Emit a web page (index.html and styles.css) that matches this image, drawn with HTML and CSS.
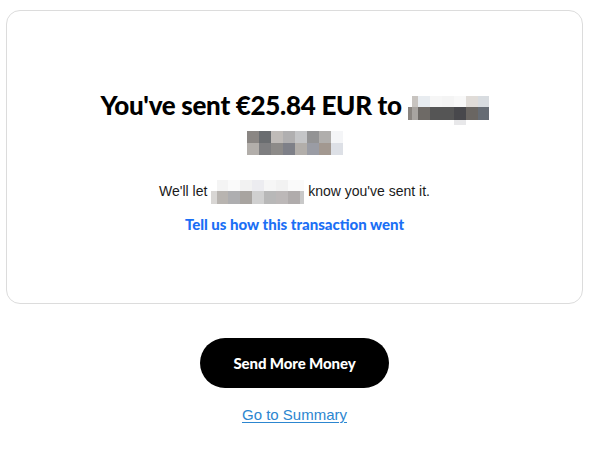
FILE: index.html
```html
<!DOCTYPE html>
<html lang="en">
<head>
<meta charset="utf-8">
<title>Transfer sent</title>
<link rel="stylesheet" href="styles.css">
</head>
<body>
<main class="page">
  <section class="card">
    <h1 class="title">You've sent €25.84 EUR to <span class="mosaic mosaic-name1"></span> <span class="mosaic mosaic-name2"></span></h1>
    <p class="note">We'll let <span class="mosaic mosaic-name3"></span> know you've sent it.</p>
    <a class="feedback" href="#">Tell us how this transaction went</a>
  </section>
  <a class="btn" href="#">Send More Money</a>
  <a class="summary" href="#">Go to Summary</a>
</main>
</body>
</html>
```
FILE: styles.css
```css
html, body {
  margin: 0;
  padding: 0;
  background: #ffffff;
}

.page {
  width: 577px;
  margin-left: 6px;
  padding-top: 10px;
  display: flex;
  flex-direction: column;
  align-items: center;
  font-family: "Liberation Sans", Arial, sans-serif;
}

.card {
  box-sizing: border-box;
  width: 577px;
  height: 294px;
  border: 1px solid #dcdcdc;
  border-radius: 14px;
  padding: 77px 20px 0;
  display: flex;
  flex-direction: column;
  align-items: center;
  text-align: center;
}

.title {
  margin: 0;
  max-width: 420px;
  font-family: Lato, "Open Sans", sans-serif;
  font-weight: 900;
  font-size: 26px;
  line-height: 35px;
  letter-spacing: -0.3px;
  color: #000;
}

.mosaic {
  display: inline-block;
  vertical-align: middle;
}

.mosaic-name1 {
  width: 81px;
  height: 29px;
  position: relative;
  top: 2px;
  background:
    linear-gradient(to right, #ffffff 0 4px, #c8c4c0 4px 10px, #e8ecf0 10px 22px, #f6f6f6 22px 34px, #f4f4f4 34px 46px, #f8f8f8 46px 58px, #e0dcd8 58px 70px, #d8dce0 70px 81px) top / 100% 11px no-repeat,
    linear-gradient(to right, #8a8580 0 4px, #a8a4a0 4px 10px, #6e6a66 10px 22px, #555555 22px 34px, #555555 34px 46px, #48484c 46px 58px, #6a6662 58px 70px, #666c74 70px 81px) 0 11px / 100% 13px no-repeat,
    linear-gradient(to right, transparent 0 46px, #e8e8ea 46px 58px, transparent 58px) 0 24px / 100% 5px no-repeat;
}

.mosaic-name2 {
  width: 96px;
  height: 24px;
  background:
    linear-gradient(to right, #8a8683 0 12px, #6a6d70 12px 24px, #bfbbb8 24px 36px, #b0afb0 36px 48px, #c4c5c7 48px 60px, #939394 60px 72px, #b0aeac 72px 84px, #f4f5f7 84px 96px) top / 100% 12px no-repeat,
    linear-gradient(to right, #b2aeaa 0 12px, #7e7e80 12px 24px, #8d8b89 24px 36px, #7e8088 36px 48px, #b2aeaa 48px 60px, #9a9ca4 60px 72px, #a29890 72px 84px, #dde0e6 84px 96px) bottom / 100% 12px no-repeat;
}

.note {
  margin: 22px 0 0;
  font-size: 14px;
  line-height: 20px;
  color: #1a1a1a;
}

.mosaic-name3 {
  width: 93px;
  height: 24px;
  background:
    linear-gradient(to right, #ffffff 0 6px, #f4f4f4 6px 17px, #fafafa 17px 29px, #f2f2f2 29px 41px, #ececf0 41px 53px, #f6f6f6 53px 65px, #f2f2f2 65px 77px, #fafafa 77px 93px) top / 100% 11px no-repeat,
    linear-gradient(to right, #d8d6d4 0 6px, #b8b4b0 6px 17px, #aeaeb0 17px 29px, #a8a4a0 29px 41px, #d0d0d0 41px 53px, #b8b8b8 53px 65px, #bcb8b8 65px 77px, #b0acac 77px 89px, #c8c8c8 89px 93px) bottom / 100% 13px no-repeat;
}

.feedback {
  margin-top: 10px;
  font-family: Lato, "Open Sans", sans-serif;
  font-weight: 900;
  font-size: 15px;
  line-height: 20px;
  letter-spacing: 0;
  color: #1b6ff5;
  text-decoration: none;
}

.btn {
  margin-top: 34px;
  box-sizing: border-box;
  width: 189px;
  height: 50px;
  border-radius: 25px;
  background: #000;
  color: #fff;
  display: flex;
  align-items: center;
  justify-content: center;
  font-family: Lato, "Open Sans", sans-serif;
  font-weight: 900;
  font-size: 15px;
  letter-spacing: -0.1px;
  text-decoration: none;
}

.summary {
  margin-top: 17px;
  font-size: 15px;
  line-height: 20px;
  color: #2c86d0;
  text-decoration: underline;
  text-underline-offset: 2px;
}
```
